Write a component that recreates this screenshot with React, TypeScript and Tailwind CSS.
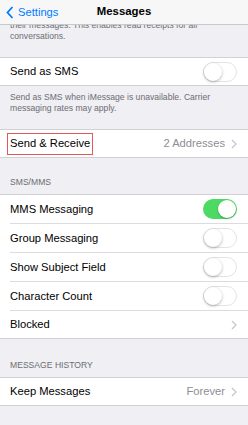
import React from "react";

const font = { fontFamily: '"Liberation Sans", Arial, sans-serif' };

function Toggle({ on }: { on?: boolean }) {
  return on ? (
    <div className="relative h-[20px] w-[34px] rounded-full bg-[#4cd964]">
      <div className="absolute right-[1px] top-[1px] h-[18px] w-[18px] rounded-full bg-white shadow-[0_1px_2px_rgba(0,0,0,0.25)]" />
    </div>
  ) : (
    <div className="relative h-[20px] w-[34px] rounded-full border border-[#e3e3e6] bg-white">
      <div className="absolute left-0 top-0 h-[18px] w-[18px] rounded-full bg-white shadow-[0_1px_3px_rgba(0,0,0,0.3)]" />
    </div>
  );
}

function Chevron() {
  return (
    <svg width="6" height="10" viewBox="0 0 6 10" className="ml-[6px]">
      <path d="M1 1l4 4-4 4" fill="none" stroke="#c7c7cc" strokeWidth="1.3" />
    </svg>
  );
}

function Row({
  label,
  value,
  toggle,
  chevron,
  last,
  boxed,
}: {
  label: string;
  value?: string;
  toggle?: "on" | "off";
  chevron?: boolean;
  last?: boolean;
  boxed?: boolean;
}) {
  return (
    <div className={`flex bg-white pl-[10px] ${last ? "h-[27px]" : "h-[29px]"}`}>
      <div className={`flex flex-1 items-center pr-[11px] ${last ? "" : "border-b border-[#dcdce0]"}`}>
        {boxed ? (
          <span className="-ml-[3px] flex h-[22px] items-center border border-[#e05a5a] px-[2px] text-[11.2px] text-black">
            {label}
          </span>
        ) : (
          <span className="text-[11.2px] text-black">{label}</span>
        )}
        <div className="flex-1" />
        {value && <span className="text-[11.2px] text-[#8e8e93]">{value}</span>}
        {chevron && <Chevron />}
        {toggle && <Toggle on={toggle === "on"} />}
      </div>
    </div>
  );
}

function Group({ children }: { children: React.ReactNode }) {
  return <div className="shrink-0 border-y border-[#d0d0d5] bg-white">{children}</div>;
}

export default function App() {
  return (
    <div className="flex h-[425px] w-[248px] flex-col overflow-hidden bg-[#efeff4]" style={font}>
      <div className="relative z-10 flex h-[25px] shrink-0 items-center border-b border-[#c8c8cc] bg-[#f7f7f8]">
        <svg width="8" height="13" viewBox="0 0 8 13" className="ml-[6px]">
          <path d="M6.5 1L1.5 6.5l5 5.5" fill="none" stroke="#007aff" strokeWidth="1.8" />
        </svg>
        <span className="ml-[4px] text-[11.2px] text-[#007aff]">Settings</span>
        <span className="pointer-events-none absolute left-0 right-0 text-center text-[11.4px] font-bold text-black">
          Messages
        </span>
      </div>
      <div className="h-[32px] shrink-0 overflow-hidden px-[10px]">
        <div className="-mt-[5px] text-[8.6px] leading-[11px] text-[#6d6d72]">
          their messages. This enables read receipts for all
          <br />
          conversations.
        </div>
      </div>
      <Group>
        <Row label="Send as SMS" toggle="off" last />
      </Group>
      <div className="h-[43px] shrink-0 px-[10px] pt-[6px] text-[8.6px] leading-[11px] text-[#6d6d72]">
        Send as SMS when iMessage is unavailable. Carrier
        <br />
        messaging rates may apply.
      </div>
      <Group>
        <Row label="Send & Receive" value="2 Addresses" chevron last boxed />
      </Group>
      <div className="flex h-[36px] shrink-0 items-end px-[10px] pb-[5px] text-[8.6px] text-[#6d6d72]">SMS/MMS</div>
      <Group>
        <Row label="MMS Messaging" toggle="on" />
        <Row label="Group Messaging" toggle="off" />
        <Row label="Show Subject Field" toggle="off" />
        <Row label="Character Count" toggle="off" />
        <Row label="Blocked" chevron last />
      </Group>
      <div className="flex h-[38px] shrink-0 items-end px-[10px] pb-[5px] text-[8.6px] text-[#6d6d72]">
        MESSAGE HISTORY
      </div>
      <Group>
        <Row label="Keep Messages" value="Forever" chevron last />
      </Group>
    </div>
  );
}
